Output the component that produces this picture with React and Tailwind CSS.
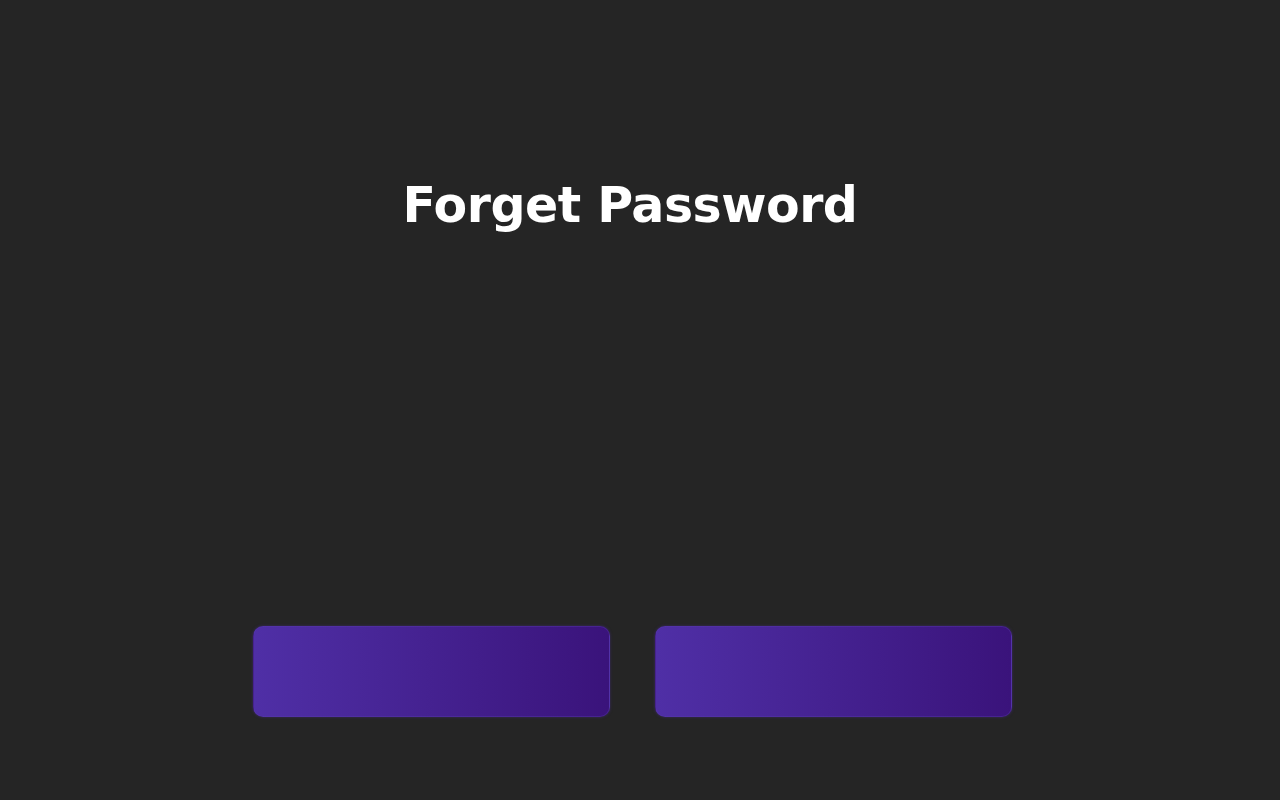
export default function App() {
  return (
    <div className="flex min-h-[800px] w-full flex-col items-center bg-[#252525] pt-[174px] font-['DejaVu_Sans',sans-serif]">
      <h1 className="mr-[20px] text-[49px] font-bold leading-[64px] tracking-[-0.5px] text-white">Forget Password</h1>
      <div className="mt-[388px] flex gap-[45px] pr-[15px]">
        <button
          type="button"
          className="h-[91px] w-[357px] rounded-[10px] border border-[#5a3ab0]/40 bg-gradient-to-r from-[#4f2fa6] to-[#3a137b] shadow-[0_0_3px_rgba(80,48,168,0.5)]"
        />
        <button
          type="button"
          className="h-[91px] w-[357px] rounded-[10px] border border-[#5a3ab0]/40 bg-gradient-to-r from-[#4f2fa6] to-[#3a137b] shadow-[0_0_3px_rgba(80,48,168,0.5)]"
        />
      </div>
    </div>
  )
}
